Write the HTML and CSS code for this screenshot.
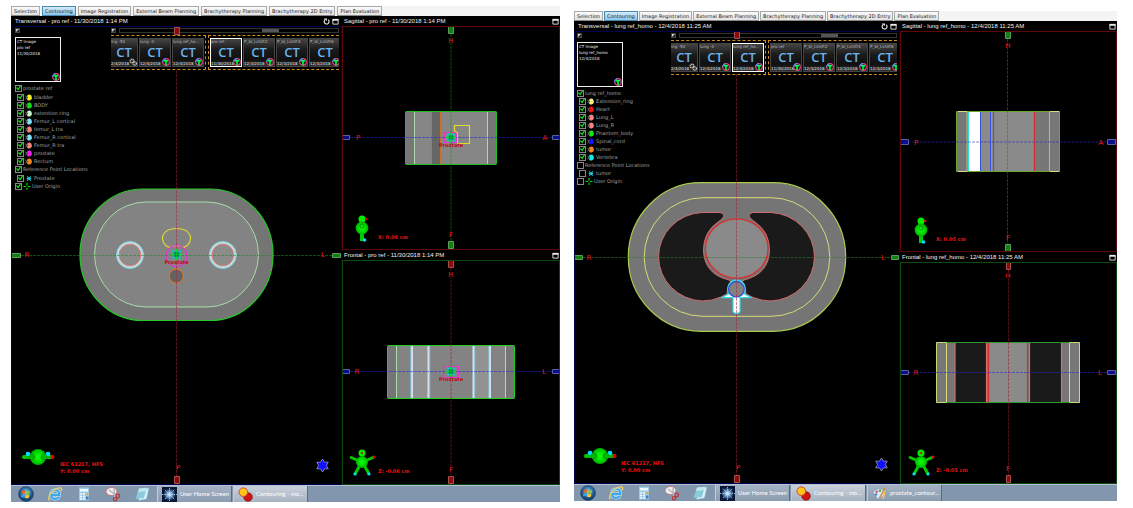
FILE: index.html
```html
<!DOCTYPE html>
<html lang="en">
<head>
<meta charset="utf-8">
<title>Contouring</title>
<link rel="stylesheet" href="styles.css">
</head>
<body>
<svg class="defs" aria-hidden="true">
  <defs>
    <radialGradient id="ball"><stop offset="0" stop-color="#1f1"/><stop offset=".6" stop-color="#0d0"/><stop offset="1" stop-color="#0a0"/></radialGradient>
    <radialGradient id="orb" cx=".5" cy=".4"><stop offset="0" stop-color="#a8dcf4"/><stop offset=".6" stop-color="#2f74ac"/><stop offset="1" stop-color="#173f6e"/></radialGradient>
    <radialGradient id="nova"><stop offset="0" stop-color="#fff"/><stop offset=".3" stop-color="#8fc0e8"/><stop offset="1" stop-color="#0b1f48"/></radialGradient>
    <symbol id="man-top" viewBox="0 0 34 18" overflow="visible">
      <path d="M3 9h8M23 9h8" stroke="#0b0" stroke-width="4"/>
      <circle cx="17" cy="9" r="8" fill="url(#ball)"/><circle cx="3" cy="9" r="2" fill="#0c0"/><circle cx="31.500" cy="9" r="2" fill="#e00"/>
      <circle cx="7" cy="6" r="2.300" fill="#0df"/><circle cx="27" cy="6" r="2.300" fill="#0df"/>
      <g fill="#0d0" stroke="#070" stroke-width=".6"><circle cx="11" cy="9" r="2.800"/><circle cx="23" cy="9" r="2.800"/><circle cx="11" cy="9" r="1.300"/><circle cx="23" cy="9" r="1.300"/></g>
    </symbol>
    <symbol id="man-side" viewBox="0 0 14 28" overflow="visible">
      <circle cx="7" cy="4" r="3.500" fill="#0e0"/><circle cx="11.200" cy="4" r="1.200" fill="#e00"/>
      <path d="M7 18v8" stroke="#0c0" stroke-width="4"/><circle cx="7" cy="13" r="6.400" fill="url(#ball)"/>
      <circle cx="7" cy="11" r="2" fill="none" stroke="#070" stroke-width=".7"/><circle cx="9.500" cy="25" r="1.800" fill="#0df"/>
    </symbol>
    <symbol id="man-front" viewBox="0 0 26 28" overflow="visible">
      <path d="M1 8l9 4M25 8l-9 4M6 25l5-9M20 25l-5-9" stroke="#0c0" stroke-width="3"/>
      <circle cx="13" cy="4" r="3.500" fill="#0e0"/><circle cx="13" cy="4" r="1.300" fill="#a30"/>
      <circle cx="13" cy="13" r="6" fill="url(#ball)"/>
      <circle cx="25" cy="8" r="1.500" fill="#e00"/><circle cx="6" cy="25" r="1.600" fill="#0df"/><circle cx="20" cy="25" r="1.600" fill="#0df"/>
    </symbol>
    <symbol id="star" viewBox="0 0 14 14"><path d="M7 0l2.200 3.400h4L11.200 7l2 3.600h-4L7 14l-2.200-3.400h-4L2.800 7l-2-3.600h4z" fill="#11f" stroke="#bbc" stroke-width=".7"/></symbol>
    <symbol id="point" viewBox="0 0 12 12">
      <path d="M1.500 1.500l9 9M10.500 1.500l-9 9" stroke="#0cc" stroke-width="2.200"/>
      <path d="M6 0v12M0 6h12" stroke="#0d3" stroke-width="2.200"/>
      <path d="M3 4.500h6M3 7.500h6M4.500 3v6M7.500 3v6" stroke="#064" stroke-width=".8"/>
    </symbol>
    <symbol id="blob" viewBox="0 0 8 8"><path d="M2.500 1Q5 0 6.600 1.600Q8 4 6.600 6.400Q5 8 2.500 7L1.500 5.500L3 4L1.500 2.500z"/><path d="M0 2.500l2 1.500-2 1.500" stroke="#bbb" stroke-width=".8" fill="none"/></symbol>
    <symbol id="cross" viewBox="0 0 8 8"><path d="M2 1.500l4 5M6 1.500l-4 5M1.500 4h5" stroke="#1bc8d8" stroke-width="1.200"/></symbol>
    <symbol id="origin" viewBox="0 0 8 8"><path d="M4 0v3M4 5v3M0 4h3M5 4h3" stroke="#0d0" stroke-width="1.300"/></symbol>
    <symbol id="tgt" viewBox="0 0 8 8"><circle cx="4" cy="4" r="3.300" fill="#021" stroke="#e83c80" stroke-width="1.200"/><path d="M.7 4a3.300 3.300 0 0 1 3.300-3.300" stroke="#58f" stroke-width="1.200" fill="none"/><path d="M2 2.700h4M4 2.500v4.800" stroke="#0f4" stroke-width="1.600"/></symbol>
    <symbol id="gears" viewBox="0 0 8 8"><g fill="#333" stroke="#ccc" stroke-width="1.200" stroke-dasharray="1.200 .5"><circle cx="3" cy="3" r="1.900"/><circle cx="5.700" cy="5.500" r="1.700"/></g></symbol>
    <symbol id="pin" viewBox="0 0 6 6"><path d="M.4.4h5.200v5.200H.4z" fill="#222" stroke="#777" stroke-width=".7"/><path d="M1.200 4.800V1.200h3.600z" fill="#ccc"/></symbol>
    <symbol id="reload" viewBox="0 0 8 8"><path d="M2.500 1.800A2.800 2.800 0 1 0 6 2" fill="none" stroke="#eee" stroke-width="1.300"/><path d="M1 .5h3.500v3z" fill="#eee"/></symbol>
    <symbol id="max" viewBox="0 0 8 8"><path d="M1 2h6v5H1z" fill="none" stroke="#eee"/><path d="M.5 1h7v2h-7z" fill="#eee"/></symbol>
    <symbol id="win" viewBox="0 0 16 16"><circle cx="8" cy="8" r="7.500" fill="url(#orb)" stroke="#26496f" stroke-width=".6"/><path d="M4 5q2-1.300 3.700-.3l-.6 3q-1.700-.8-3.600.2z" fill="#f0602c"/><path d="M8.300 5q1.900 1 3.900 0l-.6 3q-2 1-3.900 0z" fill="#8cc63f"/><path d="M3.400 8.700q1.900-1 3.600-.2l-.6 2.900q-1.800-.8-3.500.2z" fill="#39a5e0"/><path d="M7.600 8.800q1.900 1 3.900 0l-.7 2.900q-2 1-3.800-.1z" fill="#fdc92e"/></symbol>
    <symbol id="ie" viewBox="0 0 16 16"><path d="M12 11Q10.500 13 8.200 13Q4 12.600 4 8.400Q4.300 4.200 8.300 4Q12.300 4.300 12.400 8.800H5" fill="none" stroke="#dff2ff" stroke-width="3.200"/><path d="M12 11Q10.500 13 8.200 13Q4 12.600 4 8.400Q4.300 4.200 8.300 4Q12.300 4.300 12.400 8.800H5" fill="none" stroke="#38a8e8" stroke-width="2.200"/><path d="M2.500 14.500Q0 12 4.500 6.500Q10 1 14 2Q15.500 2.800 13.700 5.500" fill="none" stroke="#f0d060" stroke-width="1.300"/></symbol>
    <symbol id="calc" viewBox="0 0 16 16"><path d="M3 1.500h10v13H3z" fill="#9ccbe8"/><path d="M4 3h8v2.500H4z" fill="#eef8ff"/><path d="M4 8h5M4 10.500h5M4 13h5" stroke="#f4faff" stroke-width="1.600" stroke-dasharray="2 1"/><path d="M10 8h2.500" stroke="#f0a23a" stroke-width="1.600"/><path d="M10 12h2.500" stroke="#4484bb" stroke-width="3"/></symbol>
    <symbol id="snip" viewBox="0 0 16 16"><ellipse cx="6.500" cy="5.500" rx="5.500" ry="4" fill="#eee" stroke="#c66" stroke-width=".8"/><path d="M4 4l8 6M9 3l1 10" stroke="#aeb6bf" stroke-width="1.500"/><circle cx="12.700" cy="10" r="1.800" fill="none" stroke="#b33" stroke-width="1.200"/><circle cx="10" cy="13.300" r="1.700" fill="none" stroke="#b33" stroke-width="1.200"/></symbol>
    <symbol id="note" viewBox="0 0 16 16"><path d="M6 3l9-1-2.500 11-8 1.500z" fill="#dff3f7" stroke="#7fb9c8" stroke-width=".6"/><path d="M5 2.500l8-.8L10 12l-8.500 1z" fill="#8bcbdc"/><path d="M5 2.500l8-.8-1 3.500-8 .8z" fill="#bfe5ee"/></symbol>
    <symbol id="nova-i" viewBox="0 0 16 16"><path d="M0 0h16v16H0z" fill="#0a1838"/><circle cx="8" cy="8" r="6.500" fill="url(#nova)"/><path d="M0 8h16M8 1v14M3 3l10 10M13 3L3 13" stroke="#bfe0ff" stroke-width=".8" stroke-dasharray="1.500 1"/></symbol>
    <symbol id="balls" viewBox="0 0 16 16"><circle cx="10.700" cy="10.700" r="4.600" fill="#d01414" stroke="#700" stroke-width=".6"/><circle cx="5.700" cy="5.500" r="4.600" fill="#ffc31a" stroke="#c33" stroke-width=".9"/></symbol>
    <symbol id="paint" viewBox="0 0 16 16"><path d="M1 8Q2 3 8 3Q13 3.500 13 8Q12 13 6.500 13.500Q4 13.500 4.500 11T1 8z" fill="#d9e9f6" stroke="#6d94b8" stroke-width=".6"/><circle cx="5" cy="6" r="1.300" fill="#e44"/><circle cx="8.500" cy="5" r="1.300" fill="#4a4"/><circle cx="4.500" cy="9" r="1.200" fill="#38c"/><path d="M14.500 1.500L8 13" stroke="#d98a3a" stroke-width="1.600"/><path d="M12 14l2-9" stroke="#f4d25a" stroke-width="1.200"/></symbol>
  </defs>
</svg>

<main class="desk">
  <section class="station">
    <nav class="tabs">
      <button>Selection</button><button class="on">Contouring</button><button>Image Registration</button><button>External Beam Planning</button><button>Brachytherapy Planning</button><button>Brachytherapy 2D Entry</button><button>Plan Evaluation</button>
    </nav>
    <div class="views views-a">
      <article class="pane pane-main">
        <header class="bar"><h2>Transversal - pro ref - 11/30/2018 1:14 PM</h2><svg class="tool"><use href="#reload"/></svg><svg class="tool"><use href="#max"/></svg></header>
        <div class="stage">
          <div class="overlay">
            <aside class="side">
              <svg class="pin"><use href="#pin"/></svg>
              <div class="patient"><span>CT Image</span><span>pro ref</span><span>11/30/2018</span><svg class="badge"><use href="#tgt"/></svg></div>
              <ul class="tree tree-a">
                <li class="root"><label><input type="checkbox" checked>prostate ref</label></li>
                <li><label><input type="checkbox" checked><svg fill="#f4ee22"><use href="#blob"/></svg>bladder</label></li>
                <li><label><input type="checkbox" checked><svg fill="#14e014"><use href="#blob"/></svg>BODY</label></li>
                <li><label><input type="checkbox" checked><svg fill="#c8f4c8"><use href="#blob"/></svg>extention ring</label></li>
                <li><label><input type="checkbox" checked><svg fill="#7fe4f8"><use href="#blob"/></svg>Femur_L cortical</label></li>
                <li><label><input type="checkbox" checked><svg fill="#f48478"><use href="#blob"/></svg>femur_L tra</label></li>
                <li><label><input type="checkbox" checked><svg fill="#7fe4f8"><use href="#blob"/></svg>Femur_R cortical</label></li>
                <li><label><input type="checkbox" checked><svg fill="#f48478"><use href="#blob"/></svg>Femur_R tra</label></li>
                <li><label><input type="checkbox" checked><svg fill="#f01cf0"><use href="#blob"/></svg>prostate</label></li>
                <li><label><input type="checkbox" checked><svg fill="#f8841c"><use href="#blob"/></svg>Rectum</label></li>
                <li class="root"><label><input type="checkbox" checked>Reference Point Locations</label></li>
                <li><label><input type="checkbox" checked><svg><use href="#cross"/></svg>Prostate</label></li>
                <li class="root"><label><input type="checkbox" checked><svg><use href="#origin"/></svg>User Origin</label></li>
              </ul>
            </aside>
            <div class="strip">
              <div class="scroll"><svg class="pin"><use href="#pin"/></svg><div class="track"><i></i></div></div>
              <div class="groups">
                <div class="group group-past">
                  <button class="thumb cut"><span>ing -50</span><b>CT</b><small>2/4/2018</small><svg><use href="#gears"/></svg></button>
                  <button class="thumb"><span>lung -0</span><b>CT</b><small>12/4/2018</small><svg><use href="#tgt"/></svg></button>
                  <button class="thumb"><span>lung ref_ho...</span><b>CT</b><small>12/4/2018</small><svg><use href="#tgt"/></svg></button>
                </div>
                <div class="group group-next">
                  <button class="thumb picked"><span>pro ref</span><b>CT</b><small>11/30/2018</small><svg><use href="#tgt"/></svg></button>
                  <button class="thumb"><span>P_bl_Lshift2</span><b>CT</b><small>12/3/2018</small><svg><use href="#tgt"/></svg></button>
                  <button class="thumb"><span>P_bl_Lshift4</span><b>CT</b><small>12/3/2018</small><svg><use href="#tgt"/></svg></button>
                  <button class="thumb"><span>P_bl_Lshift6</span><b>CT</b><small>12/3/2018</small><svg><use href="#tgt"/></svg></button>
                </div>
              </div>
            </div>
          </div>
          <svg class="scan edge-blue" viewBox="11 26 331 459">
            <path d="M143 189H210A63 65.700 0 0 1 210 320.500H143A63 65.700 0 0 1 143 189z" fill="#757575" stroke="#28c828" stroke-width="1.200"/>
            <path d="M146 202H207A51.500 52.500 0 0 1 207 307H146A51.500 52.500 0 0 1 146 202z" fill="#838383" stroke="#a8dca8"/>
            <g fill="#c4dadb" stroke="#7fd6e4"><circle cx="130" cy="255" r="13.500"/><circle cx="222.800" cy="255" r="13.500"/></g>
            <g fill="#8c8c8a" stroke="#e07878"><circle cx="130" cy="255" r="10.800"/><circle cx="222.800" cy="255" r="10.800"/></g>
            <path d="M169 247.500C158 242 161 228.500 176.500 228.500S195 242 184 247.500Q176.500 244 169 247.500z" fill="none" stroke="#e0dc28" stroke-width="1.200"/>
            <circle cx="176.500" cy="256" r="10.500" fill="none" stroke="#e832d0" stroke-width="1.200"/>
            <circle cx="176.300" cy="276" r="7.200" fill="#636363" stroke="#d8782c" stroke-width="1.200"/>
            <path class="dash" d="M21 255.500H332" stroke="#169016"/><path class="dash" d="M176.500 70V476" stroke="#b01c38"/>
            <use href="#point" x="171" y="249" width="11" height="11"/><text class="poi" x="176.500" y="264">Prostate</text>
            <g fill="#128012" stroke="#5c9a5c"><path d="M11.500 253.500h9v4h-9zM332.500 253.500h8v4h-8z"/></g>
            <g fill="#8c0c0c" stroke="#a85050"><path d="M174.500 27.500h5v7h-5zM174.500 476.500h5v7h-5z"/></g>
            <g class="axis"><text x="27" y="257">R</text><text x="323" y="257">L</text><text x="178" y="470">P</text></g>
            <use href="#man-top" x="21" y="448" width="34" height="18"/><use href="#star" x="316" y="459" width="13" height="13"/>
            <text class="note" x="60" y="466">IEC 61217, HFS</text><text class="note" x="60" y="473">Y: 0.00 cm</text>
          </svg>
        </div>
      </article>
      <div class="stack">
        <article class="pane">
          <header class="bar"><h2>Sagittal - pro ref - 11/30/2018 1:14 PM</h2><svg class="tool"><use href="#max"/></svg></header>
          <svg class="scan edge-red" viewBox="342 26 218 224">
            <path d="M405.500 111.500h91v53h-91z" fill="#777"/><path d="M414.500 111.500h73v53h-73z" fill="#868686"/><path d="M431.500 111.500h9v53h-9z" fill="#666"/>
            <path d="M414.500 111.500v53M487.500 111.500v53" stroke="#b0d8b0"/><path d="M431.500 111.500v53M440.500 111.500v53" stroke="#c87028"/>
            <rect x="405.500" y="111.500" width="91" height="53" rx="1" fill="none" stroke="#20c020"/>
            <path d="M454.500 131V125.500h15v18h-12V133z" fill="none" stroke="#e0dc28" stroke-width="1.200"/><path d="M444.500 132.500h11l1 2v8h-12z" fill="none" stroke="#e832d0" stroke-width="1.200"/>
            <path class="dash" d="M451 34V241" stroke="#129012"/><path class="dash" d="M350 137.500H552" stroke="#2a2ab0"/>
            <use href="#point" x="446" y="132" width="10" height="11"/><text class="poi" x="451" y="147">Prostate</text>
            <g fill="#128012" stroke="#5c9a5c"><path d="M448.500 26.500h5v7h-5zM448.500 241.500h5v7h-5z"/></g>
            <g fill="#0c0c8c" stroke="#5860a0"><path d="M342.500 135.500h7v4h-7zM552.500 135.500h7v4h-7z"/></g>
            <g class="axis"><text x="451" y="43">H</text><text x="451" y="237">F</text><text x="358" y="140">P</text><text x="545" y="140">A</text></g>
            <use href="#man-side" x="355" y="215" width="14" height="28"/><text class="note" x="378" y="239">X: 0.06 cm</text>
          </svg>
        </article>
        <article class="pane">
          <header class="bar"><h2>Frontal - pro ref - 11/30/2018 1:14 PM</h2><svg class="tool"><use href="#max"/></svg></header>
          <svg class="scan edge-green" viewBox="342 260 218 225">
            <path d="M387.500 345.500h127v53h-127z" fill="#757575"/><path d="M396.500 345.500h109v53h-109z" fill="#838383"/><path d="M412 345.500h16v53h-16zM474 345.500h16v53h-16z" fill="#929292"/>
            <path d="M396.500 345.500v53M505.500 345.500v53" stroke="#a8dca8"/>
            <path d="M412 345v54M428.500 345v54M473.500 345v54M490 345v54" stroke="#dde" stroke-width="2"/>
            <path d="M410.800 345v54M429.800 345v54M474.800 345v54M488.800 345v54" stroke="#74d4e0" stroke-width=".8"/>
            <path d="M397 345.500h108" stroke="#a86050"/><rect x="387.500" y="345.500" width="127" height="53" rx="1" fill="none" stroke="#20d020"/>
            <path d="M443.500 366.500h15v11h-15z" fill="none" stroke="#e832d0" stroke-width="1.200"/>
            <path class="dash" d="M451 268V476" stroke="#a01828"/><path class="dash" d="M350 371.500H552" stroke="#2a2ab0"/>
            <use href="#point" x="446" y="366" width="10" height="11"/><text class="poi" x="451" y="381">Prostate</text>
            <g fill="#8c0c0c" stroke="#a85050"><path d="M448.500 260.500h5v7h-5zM448.500 476.500h5v7h-5z"/></g>
            <g fill="#0c0c8c" stroke="#5860a0"><path d="M342.500 369.500h7v4h-7zM552.500 369.500h7v4h-7z"/></g>
            <g class="axis"><text x="451" y="277">H</text><text x="451" y="472">F</text><text x="357" y="374">R</text><text x="544" y="374">L</text></g>
            <use href="#man-front" x="349" y="449" width="26" height="28"/><text class="note" x="378" y="473">Z: -0.06 cm</text>
          </svg>
        </article>
      </div>
    </div>
    <footer class="taskbar">
      <button class="pinned" aria-label="Start"><svg><use href="#win"/></svg></button><button class="pinned" aria-label="Browser"><svg><use href="#ie"/></svg></button><button class="pinned" aria-label="Calculator"><svg><use href="#calc"/></svg></button><button class="pinned" aria-label="Snip"><svg><use href="#snip"/></svg></button><button class="pinned" aria-label="Notes"><svg><use href="#note"/></svg></button>
      <button class="task"><svg><use href="#nova-i"/></svg>User Home Screen</button>
      <button class="task lit"><svg><use href="#balls"/></svg>Contouring - mo...</button>
    </footer>
  </section>

  <section class="station station-b">
    <nav class="tabs">
      <button>Selection</button><button class="on">Contouring</button><button>Image Registration</button><button>External Beam Planning</button><button>Brachytherapy Planning</button><button>Brachytherapy 2D Entry</button><button>Plan Evaluation</button>
    </nav>
    <div class="views views-b">
      <article class="pane pane-main">
        <header class="bar"><h2>Transversal - lung ref_homo - 12/4/2018 11:25 AM</h2><svg class="tool"><use href="#reload"/></svg><svg class="tool"><use href="#max"/></svg></header>
        <div class="stage">
          <div class="overlay">
            <aside class="side">
              <svg class="pin"><use href="#pin"/></svg>
              <div class="patient"><span>CT Image</span><span>lung ref_homo</span><span>12/4/2018</span><svg class="badge"><use href="#tgt"/></svg></div>
              <ul class="tree">
                <li class="root"><label><input type="checkbox" checked>lung ref_homo</label></li>
                <li><label><input type="checkbox" checked><svg fill="#f8f07c"><use href="#blob"/></svg>Extension_ring</label></li>
                <li><label><input type="checkbox" checked><svg fill="#ee1414"><use href="#blob"/></svg>Heart</label></li>
                <li><label><input type="checkbox" checked><svg fill="#f48484"><use href="#blob"/></svg>Lung_L</label></li>
                <li><label><input type="checkbox" checked><svg fill="#f48484"><use href="#blob"/></svg>Lung_R</label></li>
                <li><label><input type="checkbox" checked><svg fill="#14e814"><use href="#blob"/></svg>Phantom_body</label></li>
                <li><label><input type="checkbox" checked><svg fill="#1414f0"><use href="#blob"/></svg>Spinal_cord</label></li>
                <li><label><input type="checkbox" checked><svg fill="#f8841c"><use href="#blob"/></svg>tumor</label></li>
                <li><label><input type="checkbox" checked><svg fill="#14e8f0"><use href="#blob"/></svg>Vertebra</label></li>
                <li class="root"><label><input type="checkbox">Reference Point Locations</label></li>
                <li><label><input type="checkbox"><svg><use href="#cross"/></svg>tumor</label></li>
                <li class="root"><label><input type="checkbox"><svg><use href="#origin"/></svg>User Origin</label></li>
              </ul>
            </aside>
            <div class="strip">
              <div class="scroll"><svg class="pin"><use href="#pin"/></svg><div class="track"><i></i></div></div>
              <div class="groups">
                <div class="group group-past">
                  <button class="thumb cut"><span>ing -50</span><b>CT</b><small>2/4/2018</small><svg><use href="#gears"/></svg></button>
                  <button class="thumb"><span>lung -0</span><b>CT</b><small>12/4/2018</small><svg><use href="#tgt"/></svg></button>
                  <button class="thumb picked"><span>lung ref_ho...</span><b>CT</b><small>12/4/2018</small><svg><use href="#tgt"/></svg></button>
                </div>
                <div class="group group-next">
                  <button class="thumb"><span>pro ref</span><b>CT</b><small>11/30/2018</small><svg><use href="#tgt"/></svg></button>
                  <button class="thumb"><span>P_bl_Lshift2</span><b>CT</b><small>12/3/2018</small><svg><use href="#tgt"/></svg></button>
                  <button class="thumb"><span>P_bl_Lshift4</span><b>CT</b><small>12/3/2018</small><svg><use href="#tgt"/></svg></button>
                  <button class="thumb"><span>P_bl_Lshift6</span><b>CT</b><small>12/3/2018</small><svg><use href="#tgt"/></svg></button>
                </div>
              </div>
            </div>
          </div>
          <svg class="scan edge-blue" viewBox="574 31 326 453">
            <path d="M701 182.700H773A72.700 74.300 0 0 1 773 331.300H701A72.700 74.300 0 0 1 701 182.700z" fill="#757575" stroke="#a8cc50" stroke-width="1.200"/>
            <path d="M703 197.700H771A58.700 59.200 0 0 1 771 316.300H703A58.700 59.200 0 0 1 703 197.700z" fill="none" stroke="#d8dc78"/>
            <g fill="#1a1a1a" stroke="#d06c6c"><path id="lobe" d="M702 212.500H720Q724 213 724 216Q723 219 718 222Q703.500 232 703.500 250Q704 274 729 280L731 282Q727 286 727 294L721 297Q712 301 702 301A45.600 44.300 0 0 1 702 212.500z"/><use href="#lobe" transform="matrix(-1 0 0 1 1473 0)"/></g>
            <ellipse cx="736.700" cy="248.500" rx="31.300" ry="29.700" fill="#8a8a8a" stroke="#d83030" stroke-width="1.300"/>
            <path d="M728.500 285A9 9 0 0 1 744.500 285Q746 290 744.500 294L751.500 297.700H740V312Q736.500 315 733 312V297.700H721.500L728.500 294Q727 289 728.500 285z" fill="#fff" stroke="#30dcec" stroke-width="1.200"/>
            <circle cx="736.400" cy="289.300" r="7.800" fill="#808080" stroke="#3450d0" stroke-width="1.400"/>
            <path class="dash" d="M583 257.500H891" stroke="#169016"/><path class="dash" d="M736.500 74V475" stroke="#b01c38"/>
            <g fill="#128012" stroke="#5c9a5c"><path d="M574.500 255.500h8v4h-8zM891.500 255.500h7v4h-7z"/></g>
            <g fill="#8c0c0c" stroke="#a85050"><path d="M734.500 31.500h5v7h-5zM734.500 475.500h5v7h-5z"/></g>
            <g class="axis"><text x="589" y="260">R</text><text x="883" y="260">L</text><text x="738" y="470">P</text></g>
            <use href="#man-top" x="583" y="447" width="34" height="18"/><use href="#star" x="875" y="458" width="13" height="13"/>
            <text class="note" x="621" y="465">IEC 61217, HFS</text><text class="note" x="621" y="472">Y: 0.00 cm</text>
          </svg>
        </div>
      </article>
      <div class="stack">
        <article class="pane">
          <header class="bar"><h2>Sagittal - lung ref_homo - 12/4/2018 11:25 AM</h2><svg class="tool"><use href="#max"/></svg></header>
          <svg class="scan edge-red" viewBox="900 31 217 221">
            <path d="M956.500 111.500h103v60h-103z" fill="#777"/><path d="M980 111.500h54v60h-54z" fill="#8a8a8a"/><path d="M968.500 111.500h12v60h-12z" fill="#fff"/>
            <path d="M956.500 111.500v60M967 111.500v60M1049.500 111.500v60M1059.500 111.500v60" stroke="#b8bc70"/><path d="M968.500 111.500v60" stroke="#30dce8" stroke-width="1.200"/>
            <path d="M980.500 111.500v60M990.500 111.500v60" stroke="#3c50e0"/><path d="M991.700 111.500v60" stroke="#30b8e8"/><path d="M993.500 111.500v60M1034.500 111.500v60" stroke="#d82c38" stroke-width="1.200"/>
            <rect x="956.500" y="111.500" width="103" height="60" rx="1" fill="none" stroke="#68a830"/><path d="M958 111.500h9M958 171.500h9M1050 111.500h9M1050 171.500h9" stroke="#d8dc90"/>
            <path class="dash" d="M1007.500 39V244" stroke="#129012"/><path class="dash" d="M908 142H1108" stroke="#2a2ab0"/>
            <g fill="#128012" stroke="#5c9a5c"><path d="M1005.500 31.500h5v7h-5zM1005.500 244.500h5v7h-5z"/></g>
            <g fill="#0c0c8c" stroke="#5860a0"><path d="M900.500 139.500h8v5h-8zM1107.500 139.500h8v5h-8z"/></g>
            <g class="axis"><text x="1008" y="48">H</text><text x="1008" y="240">F</text><text x="916" y="145">P</text><text x="1101" y="145">A</text></g>
            <use href="#man-side" x="914" y="217" width="14" height="28"/><text class="note" x="936" y="241">X: 0.05 cm</text>
          </svg>
        </article>
        <article class="pane">
          <header class="bar"><h2>Frontal - lung ref_homo - 12/4/2018 11:25 AM</h2><svg class="tool"><use href="#max"/></svg></header>
          <svg class="scan edge-green" viewBox="900 262 217 222">
            <path d="M936.500 342.500h143v60h-143z" fill="#777"/><path d="M955 342.500h31v60h-31zM1030 342.500h31v60h-31z" fill="#1a1a1a"/><path d="M988 342.500h40v60h-40z" fill="#8a8a8a"/>
            <path d="M955 342.500v60M986.500 342.500v60M1029.500 342.500v60M1061.500 342.500v60" stroke="#d07070" stroke-width="1.200"/><path d="M988.500 342.500v60M1027.500 342.500v60" stroke="#d03030" stroke-width="1.200"/>
            <path d="M946.500 342.500v60M1069.500 342.500v60" stroke="#d8dc78"/><path d="M946 342.500H1070M946 402.500H1070" stroke="#309830"/>
            <path d="M946.500 342.500h-10v60h10M1069.500 342.500h10v60h-10" fill="none" stroke="#c8dc68"/>
            <path class="dash" d="M1008.500 270V475" stroke="#a01828"/><path class="dash" d="M908 372.500H1108" stroke="#2a2ab0"/>
            <g fill="#8c0c0c" stroke="#a85050"><path d="M1006.500 262.500h4v7h-4zM1006.500 475.500h4v7h-4z"/></g>
            <g fill="#0c0c8c" stroke="#5860a0"><path d="M900.500 370.500h8v4h-8zM1107.500 370.500h8v4h-8z"/></g>
            <g class="axis"><text x="1008" y="278">H</text><text x="1008" y="471">F</text><text x="916" y="375">R</text><text x="1100" y="375">L</text></g>
            <use href="#man-front" x="908" y="449" width="26" height="28"/><text class="note" x="936" y="472">Z: -0.05 cm</text>
          </svg>
        </article>
      </div>
    </div>
    <footer class="taskbar">
      <button class="pinned" aria-label="Start"><svg><use href="#win"/></svg></button><button class="pinned" aria-label="Browser"><svg><use href="#ie"/></svg></button><button class="pinned" aria-label="Calculator"><svg><use href="#calc"/></svg></button><button class="pinned" aria-label="Snip"><svg><use href="#snip"/></svg></button><button class="pinned" aria-label="Notes"><svg><use href="#note"/></svg></button>
      <button class="task"><svg><use href="#nova-i"/></svg>User Home Screen</button>
      <button class="task lit"><svg><use href="#balls"/></svg>Contouring - mo...</button>
      <button class="task"><svg><use href="#paint"/></svg>prostate_contour...</button>
    </footer>
  </section>
</main>
</body>
</html>
```
FILE: styles.css
```css
* { box-sizing: border-box; margin: 0; padding: 0; }

body {
  background: #fff;
  font: 5px/6px "DejaVu Sans", sans-serif;
}

button { font: inherit; border: 0; background: none; color: inherit; }
ul { list-style: none; }
.defs { display: block; width: 0; height: 0; }

.desk {
  display: grid;
  grid-template-columns: 549fr 543fr;
  gap: 14px;
  align-items: start;
  padding: 6px 16px 6px 11px;
}
.station { min-width: 0; }
.station-b { padding-top: 5px; }

/* module tabs */
.tabs { display: flex; gap: 2px; height: 10px; background: #f4f4f4; }
.station-b .tabs { gap: 1px; }
.tabs button {
  padding: 0 2px;
  border: 1px solid #aaa;
  border-bottom-color: #888;
  background: linear-gradient(#fafafa, #e2e2e2);
  color: #222;
  line-height: 8px;
  white-space: nowrap;
}
.tabs .on { background: linear-gradient(#d4ecfa, #8cc4e8); border-color: #4a88b0; }

/* image views */
.views { display: grid; background: #000; }
.views-a { grid-template-columns: 331fr 218fr; }
.views-b { grid-template-columns: 326fr 217fr; }
.pane { min-width: 0; }
.bar { display: flex; align-items: center; gap: 2px; height: 10px; padding: 0 3px 0 4px; color: #f0f0f0; }
.stack .bar { padding: 0 1px 0 2px; }
.bar h2 { flex: 1; font: 400 6px/8px "Liberation Sans", sans-serif; white-space: nowrap; }
.tool { width: 7px; height: 7px; }

.stage { display: grid; }
.stage > * { grid-area: 1 / 1; }
.scan { display: block; width: 100%; pointer-events: none; outline: 1px solid; outline-offset: -1px; }
.edge-blue { outline-color: #00004c; }
.edge-red { outline-color: #5c0808; }
.edge-green { outline-color: #0a4a0a; }
.dash { stroke-dasharray: 3 1; opacity: .55; }
.axis { fill: #e01c1c; font-size: 7px; text-anchor: middle; }
.note { fill: #f01010; font-size: 5px; font-weight: 700; }
.poi { fill: #c00818; font-size: 5px; font-weight: 700; text-anchor: middle; }

.overlay { display: grid; grid-template-columns: 96px 1fr; align-items: start; padding: 2px 3px 0 4px; }
.station-b .overlay { grid-template-columns: 94px 1fr; padding-left: 3px; }
.pin { display: block; width: 5px; height: 5px; }

.patient {
  display: flex;
  flex-direction: column;
  position: relative;
  width: 46px;
  height: 45px;
  margin: 4px 0 2px;
  padding: 1px;
  border: 1px solid #f0f0f0;
  color: #eee;
  font-size: 4px;
  line-height: 6px;
}
.badge { position: absolute; right: 0; bottom: 0; width: 8px; height: 8px; }

.tree { color: #a0a0a0; white-space: nowrap; }
.tree li { height: 8px; padding-left: 2px; }
.tree .root { padding-left: 0; }
.tree-a .root { height: 9px; }
.tree label { display: flex; align-items: center; gap: 1px; height: 8px; }
.tree svg { width: 8px; height: 7px; }
.tree input { appearance: none; display: grid; width: 7px; height: 7px; border: 1px solid #888; }
.tree input:checked::before {
  content: "";
  background: #10e010;
  clip-path: polygon(0 50%, 20% 30%, 40% 60%, 80% 0, 100% 15%, 45% 100%);
}

/* image thumbnails */
.strip { min-width: 0; overflow: hidden; }
.scroll { display: flex; gap: 3px; }
.track { flex: 1; height: 5px; border: 1px solid #333; }
.track i { display: block; width: 17px; height: 3px; margin-left: auto; margin-right: 27%; background: #555; }
.groups { display: grid; grid-template-columns: 95px 1fr; gap: 2px; margin-top: 2px; }
.group {
  display: flex;
  gap: 1px;
  min-width: 0;
  height: 35px;
  padding: 2px 1px;
  overflow: hidden;
  border: 1px dashed #d08a1c;
}
.group-past { padding-left: 0; border-left: 0; }
.group-next { border-right: 0; padding-right: 0; }
.thumb {
  display: flex;
  flex: none;
  flex-direction: column;
  position: relative;
  width: 32px;
  height: 29px;
  border: 1px solid #444;
  background: linear-gradient(#444, #1a1a1a 40%, #101010 75%, #2c2c2c);
  color: #bbb;
  font-size: 4px;
  line-height: 5px;
  text-align: left;
  white-space: nowrap;
}
.cut { flex: 1; border-left: 0; }
.thumb b { flex: 1; color: #6cb4ec; font: 600 13px/17px "Open Sans", sans-serif; text-align: center; }
.thumb small { color: #eee; font-size: 4px; }
.thumb svg { position: absolute; right: 0; bottom: 0; width: 8px; height: 8px; }
.picked { border-color: #fff; }

/* taskbar */
.taskbar {
  display: flex;
  align-items: center;
  height: 17px;
  border-top: 1px solid #b4c0d4;
  background: #8296ae;
  color: #fff;
}
.pinned { width: 29px; height: 16px; }
.pinned svg { display: block; width: 16px; height: 16px; margin: auto; }
.station-b .pinned { width: 28px; }
.task {
  display: flex;
  align-items: center;
  gap: 3px;
  width: 75px;
  height: 16px;
  margin-left: 1px;
  padding-left: 4px;
  border-right: 1px solid #5c6c80;
  border-left: 1px solid #c0ccd8;
  background: linear-gradient(#a4b2c4, #8c9cb0);
  font: 6px/8px Lato, sans-serif;
  white-space: nowrap;
}
.task svg { width: 15px; height: 15px; }
.lit { background: linear-gradient(#c8d0da, #a8b4c2); }
```
